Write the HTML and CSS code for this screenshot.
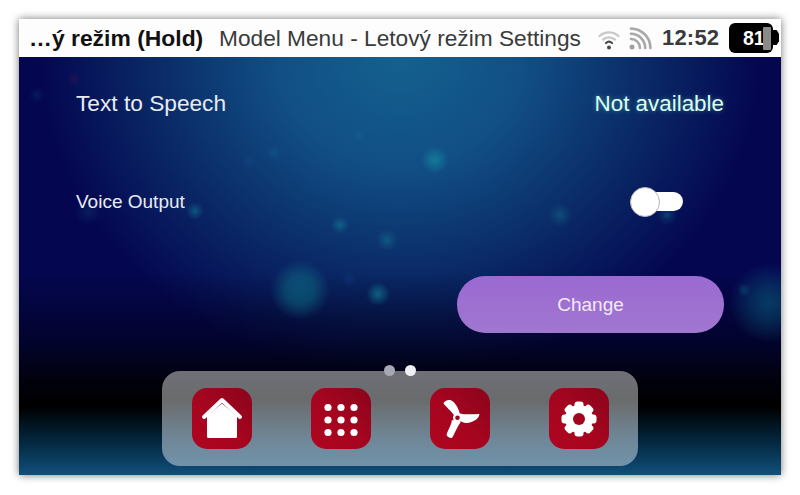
FILE: index.html
```html
<!DOCTYPE html>
<html lang="cs">
<head>
<meta charset="utf-8">
<title>Model Menu - Letový režim Settings</title>
<link rel="stylesheet" href="styles.css">
</head>
<body>
<div class="screen">
  <header class="topbar">
    <span class="mode">…ý režim (Hold)</span>
    <span class="title">Model Menu - Letový režim Settings</span>
    <svg class="ico-wifi" viewBox="0 0 22 22" width="22" height="22" fill="none" stroke="#c8c8c8" stroke-linecap="round">
      <path d="M1.5 8 A14 14 0 0 1 20.5 8" stroke-width="2.2"/>
      <path d="M5 11.6 A9 9 0 0 1 17 11.6" stroke-width="2.2"/>
      <path d="M8 15 A4.6 4.6 0 0 1 14 15" stroke="#4a4a4a" stroke-width="2.2"/>
      <circle cx="11" cy="19.4" r="2" fill="#4a4a4a" stroke="none"/>
    </svg>
    <svg class="ico-signal" viewBox="0 0 23 23" width="23" height="23" fill="none" stroke="#a8a8a8" stroke-width="2.6" stroke-linecap="round">
      <circle cx="3" cy="20" r="2.5" fill="#a0a0a0" stroke="none"/>
      <path d="M2 12 A9 9 0 0 1 11 21"/>
      <path d="M2 6.8 A14.2 14.2 0 0 1 16.2 21"/>
      <path d="M2 1.6 A19.4 19.4 0 0 1 21.4 21"/>
    </svg>
    <span class="clock">12:52</span>
    <div class="battery"><span class="batt-value">81</span><span class="batt-mark"></span></div>
  </header>

  <main class="content">
    <div class="row row-head">
      <span class="label-lg">Text to Speech</span>
      <span class="status">Not available</span>
    </div>
    <div class="row row-voice">
      <span class="label-sm">Voice Output</span>
      <span class="toggle"><span class="toggle-knob"></span></span>
    </div>
    <div class="row row-action">
      <button class="change" type="button">Change</button>
    </div>
  </main>

  <nav class="dock">
    <span class="tile">
      <svg viewBox="0 0 60 60" width="60" height="60">
        <path d="M15 28 L30 15.500 L45 28 V48.500 Q45 50 43.500 50 H16.500 Q15 50 15 48.500 Z" fill="#fff"/>
        <path d="M12 29 L30 12 L48 29" fill="none" stroke="#fff" stroke-width="4" stroke-linecap="round" stroke-linejoin="round"/>
      </svg>
    </span>
    <span class="tile">
      <svg viewBox="0 0 60 60" width="60" height="60" fill="#fff">
        <circle cx="17" cy="19.500" r="3.600"/><circle cx="30" cy="19.500" r="3.600"/><circle cx="43" cy="19.500" r="3.600"/>
        <circle cx="17" cy="32" r="3.600"/><circle cx="30" cy="32" r="3.600"/><circle cx="43" cy="32" r="3.600"/>
        <circle cx="17" cy="44.500" r="3.600"/><circle cx="30" cy="44.500" r="3.600"/><circle cx="43" cy="44.500" r="3.600"/>
      </svg>
    </span>
    <span class="tile">
      <svg viewBox="0 0 60 60" width="60" height="60">
        <path d="M25 29 C23.500 25 18 21 13.500 15.500 C14 13 18 11.500 20.500 12 C25 14 28 19 30 26 Z" fill="#fff"/>
        <path d="M30 25.500 C36 27 43 26 49.500 26 C49 29 47 31.500 44.500 32.500 C40 35.500 35 36 30.500 33 Z" fill="#fff"/>
        <path d="M22 32 C21.500 37 18.500 41 16.500 46.500 C17 49 20 50.500 22 50 C24 47 26 41 31 33.500 Z" fill="#fff"/>
        <circle cx="27.500" cy="29.700" r="4.500" fill="#fff"/>
        <circle cx="27.500" cy="29.700" r="2.300" fill="#a5051f"/>
      </svg>
    </span>
    <span class="tile">
      <svg viewBox="0 0 60 60" width="60" height="60">
        <g fill="#fff">
          <circle cx="30" cy="31" r="14"/>
          <rect x="25.500" y="13.500" width="9" height="7" rx="3"/>
          <rect x="25.500" y="41.500" width="9" height="7" rx="3"/>
          <rect x="25.500" y="13.500" width="9" height="7" rx="3" transform="rotate(45 30 31)"/>
          <rect x="25.500" y="13.500" width="9" height="7" rx="3" transform="rotate(90 30 31)"/>
          <rect x="25.500" y="13.500" width="9" height="7" rx="3" transform="rotate(135 30 31)"/>
          <rect x="25.500" y="13.500" width="9" height="7" rx="3" transform="rotate(225 30 31)"/>
          <rect x="25.500" y="13.500" width="9" height="7" rx="3" transform="rotate(270 30 31)"/>
          <rect x="25.500" y="13.500" width="9" height="7" rx="3" transform="rotate(315 30 31)"/>
        </g>
        <circle cx="30" cy="31" r="6" fill="#a0041f"/>
      </svg>
    </span>
  </nav>

  <div class="pager"><span class="pg"></span><span class="pg pg-on"></span></div>
</div>
</body>
</html>
```

FILE: styles.css
```css
* { box-sizing: border-box; }
html, body { margin: 0; height: 100%; background: #fff; overflow: hidden; }
body { padding: 19px; font-family: "Liberation Sans", Arial, sans-serif; }

.screen {
  position: relative;
  width: 762px;
  height: 456px;
  display: flex;
  flex-direction: column;
  box-shadow: 0 0 8px rgba(0, 0, 0, .55);
  background: #000;
}

.topbar {
  height: 38px;
  flex: none;
  display: flex;
  align-items: center;
  background: #fdfdfd;
  padding: 0 2px 0 10px;
  color: #3a3a3a;
  font-size: 22.700px;
  white-space: nowrap;
}
.mode { font-weight: 700; color: #111; width: 190px; font-size: 22.900px; }
.title { width: 379px; }
.ico-wifi { flex: none; margin-top: 1px; }
.ico-signal { flex: none; margin-left: 9px; }
.clock { font-weight: 700; margin-left: 10px; width: 67px; font-size: 22px; letter-spacing: .2px; }
.battery {
  position: relative;
  width: 44px;
  height: 30px;
  margin-right: 6px;
  background: #000;
  border-radius: 6px;
  color: #fff;
  font-weight: 700;
  font-size: 19.500px;
  line-height: 31px;
  padding-left: 14px;
}
.battery::after {
  content: "";
  position: absolute;
  left: 44px;
  top: 7px;
  width: 6px;
  height: 15px;
  background: #000;
  clip-path: polygon(0 0, 60% 0, 100% 25%, 100% 75%, 60% 100%, 0 100%);
}
.batt-mark {
  position: absolute;
  left: 34px;
  top: 4px;
  width: 8px;
  height: 23px;
  background: #8a8a8a;
  border-radius: 1px;
}

.content {
  flex: 1;
  display: flex;
  flex-direction: column;
  padding: 0 57px;
  color: #e8ebf2;
  background-color: #000;
  background-image:
    radial-gradient(circle at 416px 103px, rgba(20,150,170,.6) 0, rgba(20,150,170,.35) 6px, rgba(20,150,170,0) 14px),
    radial-gradient(circle at 281px 233px, rgba(14,120,140,.55) 0, rgba(14,120,140,.45) 14px, rgba(14,120,140,0) 30px),
    radial-gradient(circle at 359px 237px, rgba(20,140,160,.6) 0, rgba(20,140,160,.35) 5px, rgba(20,140,160,0) 12px),
    radial-gradient(circle at 321px 168px, rgba(20,140,160,.5) 0, rgba(20,140,160,.25) 4px, rgba(20,140,160,0) 9px),
    radial-gradient(circle at 368px 183px, rgba(20,140,160,.4) 0, rgba(20,140,160,.2) 5px, rgba(20,140,160,0) 11px),
    radial-gradient(circle at 176px 154px, rgba(20,140,160,.5) 0, rgba(20,140,160,.25) 4px, rgba(20,140,160,0) 9px),
    radial-gradient(circle at 69px 155px, rgba(20,110,140,.22) 0, rgba(20,110,140,.12) 6px, rgba(20,110,140,0) 13px),
    radial-gradient(circle at 541px 158px, rgba(20,130,150,.4) 0, rgba(20,130,150,.2) 5px, rgba(20,130,150,0) 12px),
    radial-gradient(circle at 488px 237px, rgba(20,120,140,.3) 0, rgba(20,120,140,0) 7px),
    radial-gradient(circle at 648px 158px, rgba(20,130,150,.45) 0, rgba(20,130,150,.2) 4px, rgba(20,130,150,0) 10px),
    radial-gradient(circle at 750px 246px, rgba(10,110,135,.5) 0, rgba(10,110,135,.35) 16px, rgba(10,110,135,0) 40px),
    radial-gradient(circle at 725px 233px, rgba(20,120,150,.35) 0, rgba(20,120,150,0) 7px),
    radial-gradient(circle at 55px 22px, rgba(120,30,80,.2) 0, rgba(120,30,80,0) 7px),
    radial-gradient(circle at 18px 38px, rgba(20,100,140,.2) 0, rgba(20,100,140,0) 8px),
    radial-gradient(circle at 255px 96px, rgba(20,120,160,.25) 0, rgba(20,120,160,0) 8px),
    radial-gradient(circle at 340px 78px, rgba(20,120,160,.2) 0, rgba(20,120,160,0) 7px),
    radial-gradient(circle at 230px 105px, rgba(30,90,170,.2) 0, rgba(30,90,170,0) 7px),
    radial-gradient(circle at 330px 222px, rgba(30,70,170,.25) 0, rgba(30,70,170,0) 7px),
    linear-gradient(180deg, rgba(0,0,0,0) 0, rgba(0,0,0,0) 215px, rgba(0,0,0,.45) 285px, rgba(0,0,0,.85) 325px, #000 350px, #03283f 385px, #10507c 418px),
    radial-gradient(ellipse 410px 360px at 381px 0, #14618f 0, #114f85 30%, #0b2f6a 56%, #040650 88%, #040650 100%);
  background-size: 100% 100%;
}

.row { display: flex; justify-content: space-between; align-items: center; }
.row-head { height: 94px; }
.row-voice { height: 102px; padding-right: 41px; }
.row-action { justify-content: flex-end; margin-top: 23px; }

.label-lg { font-size: 22.700px; margin-bottom: 2px; }
.label-sm { font-size: 19px; }
.status { font-size: 22.400px; color: #d9fff2; text-shadow: 0 0 5px rgba(140, 255, 220, .4); }

.toggle {
  position: relative;
  display: block;
  width: 53px;
  height: 30px;
}
.toggle::before {
  content: "";
  position: absolute;
  left: 15px;
  right: 0;
  top: 5px;
  height: 19px;
  background: #fff;
  border-radius: 10px;
}
.toggle-knob {
  position: absolute;
  left: 0;
  top: 0;
  width: 30px;
  height: 30px;
  border-radius: 50%;
  background: #fff;
  border: 1px solid #b5b5b5;
}

.change {
  width: 267px;
  height: 57px;
  border: 0;
  border-radius: 28px;
  background: linear-gradient(180deg, #9b69d2, #a077d0);
  color: #f2e9fb;
  font: 19px "Liberation Sans", Arial, sans-serif;
  padding: 0;
}

.pager {
  position: absolute;
  left: 365px;
  top: 346px;
  display: flex;
  gap: 10px;
}
.pg { width: 11px; height: 11px; border-radius: 50%; background: #a6a8b4; }
.pg-on { background: #eef0f4; }

.dock {
  position: absolute;
  left: 143px;
  top: 352px;
  width: 476px;
  height: 95px;
  border-radius: 18px;
  background: linear-gradient(180deg, #6f7078 0, #6a6b6c 30%, #6f8696 70%, #7193aa 100%);
  display: flex;
  gap: 59px;
  padding: 17px 0 0 30px;
}
.tile {
  display: block;
  width: 60px;
  height: 61px;
  border-radius: 15px;
  background: linear-gradient(45deg, #b00520 0, #a5051f 50%, #8a041c 100%);
}
.tile svg { display: block; }
```
